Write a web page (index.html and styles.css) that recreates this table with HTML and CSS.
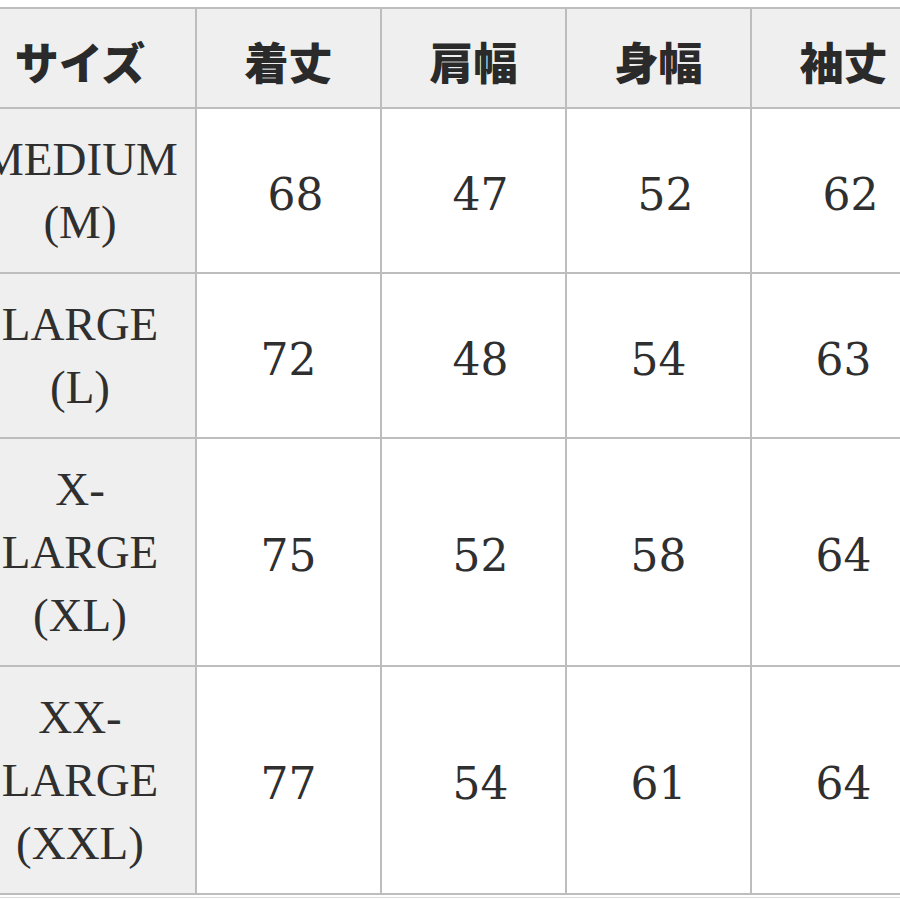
FILE: index.html
```html
<!DOCTYPE html>
<html lang="ja">
<head>
<meta charset="utf-8">
<title>サイズ表</title>
<link rel="stylesheet" href="styles.css">
</head>
<body>
<div class="frame">
  <table class="chart">
    <colgroup>
      <col class="c-size">
      <col class="c-val">
      <col class="c-val">
      <col class="c-val">
      <col class="c-val">
    </colgroup>
    <thead>
      <tr class="head">
        <th>サイズ</th>
        <th>着丈</th>
        <th>肩幅</th>
        <th>身幅</th>
        <th>袖丈</th>
      </tr>
    </thead>
    <tbody>
      <tr>
        <th class="size">MEDIUM<br>(M)</th>
        <td class="nudge">68</td>
        <td class="nudge">47</td>
        <td class="nudge">52</td>
        <td class="nudge">62</td>
      </tr>
      <tr>
        <th class="size">LARGE<br>(L)</th>
        <td>72</td>
        <td class="nudge">48</td>
        <td>54</td>
        <td>63</td>
      </tr>
      <tr>
        <th class="size">X-<br>LARGE<br>(XL)</th>
        <td>75</td>
        <td class="nudge">52</td>
        <td>58</td>
        <td>64</td>
      </tr>
      <tr>
        <th class="size">XX-<br>LARGE<br>(XXL)</th>
        <td>77</td>
        <td class="nudge">54</td>
        <td>61</td>
        <td>64</td>
      </tr>
    </tbody>
  </table>
</div>
</body>
</html>
```
FILE: styles.css
```css
html, body {
  margin: 0;
  padding: 0;
  background: #ffffff;
  overflow: hidden;
}

.frame {
  margin-top: 7px;
  margin-left: -37px;
  width: 980px;
  padding-bottom: 2px;
  border-bottom: 1px solid #dddddd;
}

.chart {
  border-collapse: collapse;
  table-layout: fixed;
  width: 972px;
  color: #2f2f2f;
  font-family: "Liberation Serif", "Times New Roman", serif;
}

.c-size { width: 232px; }
.c-val { width: 185px; }

.chart th,
.chart td {
  border: 2px solid #bdbdbd;
  text-align: center;
  vertical-align: middle;
  padding: 0;
}

.chart .head th {
  height: 100px;
  background: #efefef;
  font-family: "Noto Sans CJK JP", sans-serif;
  font-weight: 900;
  font-size: 44px;
  line-height: 1;
  color: #2a2a2a;
  padding-top: 6px;
  box-sizing: border-box;
}

.chart .size {
  background: #efefef;
  font-weight: 400;
  font-size: 47px;
  line-height: 63px;
  padding: 19px 0 18px;
}

.chart td {
  background: #ffffff;
  font-family: "DejaVu Serif", "Liberation Serif", serif;
  font-size: 44px;
  line-height: 1;
  padding-top: 8px;
}

.chart td.nudge {
  padding-left: 14px;
}
```
